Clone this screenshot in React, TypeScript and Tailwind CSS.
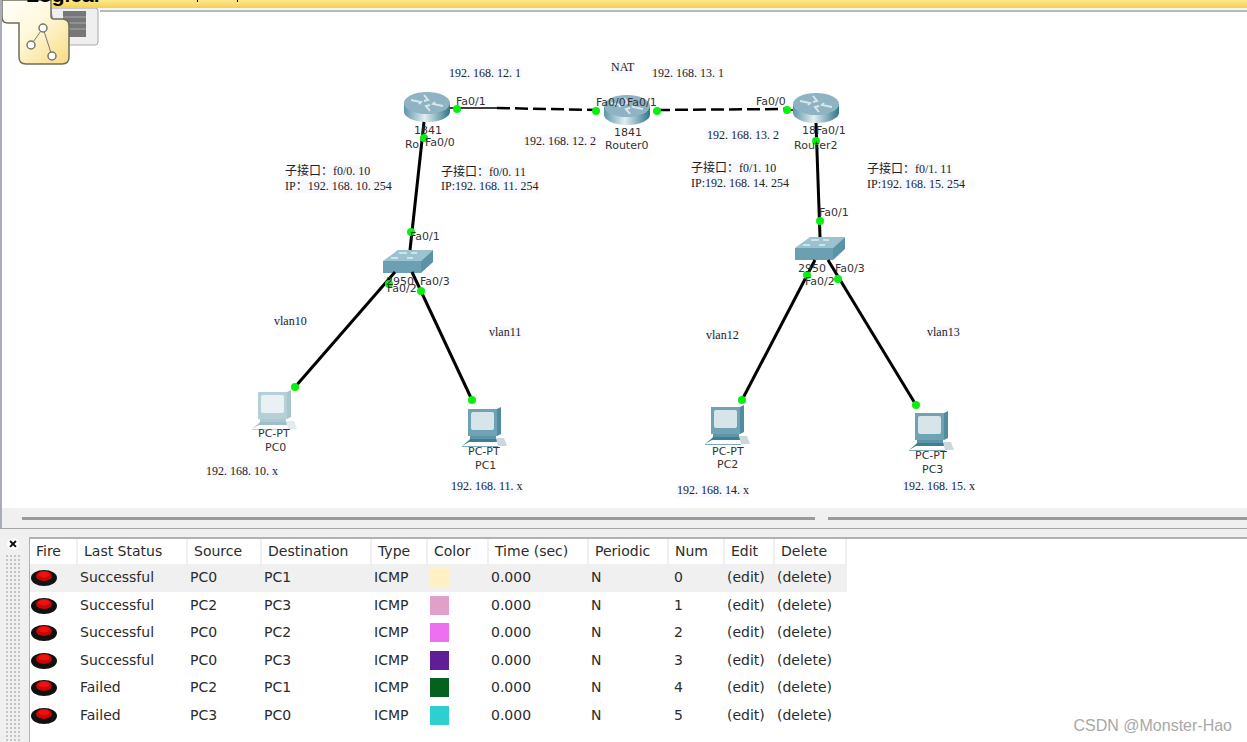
const tahoma = "font-['DejaVu_Sans',sans-serif]";
const simsun = "font-['Liberation_Serif','Noto_Sans_CJK_SC',serif] text-[12px] leading-[13px] bg-[#f7f9ff] text-[#222]";

const labels = [
  { text: "192. 168. 12. 1", pos: "left-[449px] top-[67px]" },
  { text: "NAT", pos: "left-[611px] top-[61px]" },
  { text: "192. 168. 13. 1", pos: "left-[652px] top-[67px]" },
  { text: "192. 168. 12. 2", pos: "left-[524px] top-[135px]" },
  { text: "192. 168. 13. 2", pos: "left-[707px] top-[129px]" },
  { text: "子接口：f0/0. 10", pos: "left-[285px] top-[165px]" },
  { text: "IP：192. 168. 10. 254", pos: "left-[285px] top-[180px]" },
  { text: "子接口：f0/0. 11", pos: "left-[441px] top-[166px]" },
  { text: "IP:192. 168. 11. 254", pos: "left-[441px] top-[180px]" },
  { text: "子接口：f0/1. 10", pos: "left-[691px] top-[162px]" },
  { text: "IP:192. 168. 14. 254", pos: "left-[691px] top-[177px]" },
  { text: "子接口：f0/1. 11", pos: "left-[867px] top-[163px]" },
  { text: "IP:192. 168. 15. 254", pos: "left-[867px] top-[178px]" },
  { text: "vlan10", pos: "left-[274px] top-[315px]" },
  { text: "vlan11", pos: "left-[489px] top-[326px]" },
  { text: "vlan12", pos: "left-[706px] top-[329px]" },
  { text: "vlan13", pos: "left-[927px] top-[326px]" },
  { text: "192. 168. 10. x", pos: "left-[206px] top-[465px]" },
  { text: "192. 168. 11. x", pos: "left-[451px] top-[480px]" },
  { text: "192. 168. 14. x", pos: "left-[677px] top-[484px]" },
  { text: "192. 168. 15. x", pos: "left-[903px] top-[480px]" },
];

const deviceText = [
  { text: "1841", pos: "left-[414px] top-[124px]" },
  { text: "Ro", pos: "left-[405px] top-[138px]" },
  { text: "1841", pos: "left-[614px] top-[126px]" },
  { text: "Router0", pos: "left-[605px] top-[139px]" },
  { text: "18", pos: "left-[802px] top-[124px]" },
  { text: "Router2", pos: "left-[794px] top-[139px]" },
  { text: "2950", pos: "left-[386px] top-[275px]" },
  { text: "2950", pos: "left-[798px] top-[262px]" },
  { text: "PC-PT", pos: "left-[258px] top-[427px]" },
  { text: "PC0", pos: "left-[265px] top-[441px]" },
  { text: "PC-PT", pos: "left-[468px] top-[445px]" },
  { text: "PC1", pos: "left-[475px] top-[459px]" },
  { text: "PC-PT", pos: "left-[712px] top-[445px]" },
  { text: "PC2", pos: "left-[717px] top-[458px]" },
  { text: "PC-PT", pos: "left-[915px] top-[449px]" },
  { text: "PC3", pos: "left-[922px] top-[463px]" },
];

const ports = [
  { text: "Fa0/1", pos: "left-[456px] top-[96px]" },
  { text: "Fa0/0", pos: "left-[425px] top-[137px]" },
  { text: "Fa0/0", pos: "left-[596px] top-[97px]" },
  { text: "Fa0/1", pos: "left-[627px] top-[97px]" },
  { text: "Fa0/0", pos: "left-[756px] top-[96px]" },
  { text: "Fa0/1", pos: "left-[816px] top-[125px]" },
  { text: "Fa0/1", pos: "left-[410px] top-[231px]" },
  { text: "Fa0/3", pos: "left-[420px] top-[276px]" },
  { text: "Fa0/2", pos: "left-[387px] top-[283px]" },
  { text: "Fa0/1", pos: "left-[819px] top-[207px]" },
  { text: "Fa0/3", pos: "left-[835px] top-[263px]" },
  { text: "Fa0/2", pos: "left-[805px] top-[276px]" },
];

const dots = [
  [457, 109], [596, 111], [657, 111], [787, 110], [424, 138], [816, 141],
  [411, 232], [820, 221], [389, 284], [421, 291], [807, 275], [838, 279],
  [295, 387], [472, 400], [742, 400], [916, 405],
];

const rows = [
  { status: "Successful", src: "PC0", dst: "PC1", color: "bg-[#fff1c4]", num: 0 },
  { status: "Successful", src: "PC2", dst: "PC3", color: "bg-[#e0a0c8]", num: 1 },
  { status: "Successful", src: "PC0", dst: "PC2", color: "bg-[#ec70f0]", num: 2 },
  { status: "Successful", src: "PC0", dst: "PC3", color: "bg-[#601e96]", num: 3 },
  { status: "Failed", src: "PC2", dst: "PC1", color: "bg-[#06601e]", num: 4 },
  { status: "Failed", src: "PC3", dst: "PC0", color: "bg-[#2fcfd0]", num: 5 },
];

const headers = ["Fire", "Last Status", "Source", "Destination", "Type", "Color", "Time (sec)", "Periodic", "Num", "Edit", "Delete"];
const gridCols = "grid grid-cols-[48px_110px_74px_110px_56px_61px_100px_80px_56px_50px_72px]";

function Router({ x, y }: { x: number; y: number }) {
  return (
    <g transform={`translate(${x} ${y})`}>
      <path d="M0 11v9c0 5 10 10 23 10s23-5 23-10v-9z" fill="url(#routerSide)" />
      <ellipse cx="23" cy="11" rx="23" ry="11" fill="#8fb3c3" />
      <path d="M7 8l10 2-2 2M39 14l-10-2 2-2M20 3l4 5-4 1M26 19l-4-5 4-1" fill="none" stroke="#d8e6ec" strokeWidth="2" />
    </g>
  );
}

function Switch({ x, y }: { x: number; y: number }) {
  return (
    <g transform={`translate(${x} ${y})`}>
      <path d="M0 11L15 0h35L38 11z" fill="#9ac3cf" />
      <path d="M0 11h38v12H0z" fill="#6aa0b2" />
      <path d="M38 11L50 0v12L38 23z" fill="#5b93a6" />
      <path d="M16 3h8M28 3h6M8 8h7M24 8h6" stroke="#e2eef2" strokeWidth="1.5" />
    </g>
  );
}

function Pc({ x, y, faded }: { x: number; y: number; faded?: boolean }) {
  return (
    <g transform={`translate(${x} ${y})`} opacity={faded ? 0.5 : 1}>
      <path d="M6 1h29l4-2v27l-4 2H6z" fill="#4f8ca0" />
      <path d="M6 1h29v27H6z" fill="#6fa3b3" />
      <rect x="9" y="4" width="23" height="18" rx="2" fill="#d7e4ea" />
      <path d="M8 28h26v3H8z" fill="#5b95a7" />
      <path d="M8 31h27l3 2-2 1H7l-7 4 6-5z" fill="#3f7f95" />
      <path d="M34 30h8l3 8H36z" fill="#c9d8de" />
      <path d="M0 38h36v1H0z" fill="#7da9b8" />
    </g>
  );
}

function Canvas() {
  return (
    <div className="relative h-[508px] overflow-hidden border-l-2 border-[#a9aeb6] bg-white">
      {/* the picture is offset by the 2px border, so the svg is pulled back */}
      <svg className="absolute -left-[2px] top-0" width="1247" height="508">
        <defs>
          <linearGradient id="routerSide" x1="0" x2="1" y1="0" y2="0">
            <stop offset="0" stopColor="#5f95a8" />
            <stop offset="0.45" stopColor="#e2eef2" />
            <stop offset="1" stopColor="#2f7588" />
          </linearGradient>
          <linearGradient id="tile" x1="0" x2="1" y1="0" y2="1">
            <stop offset="0" stopColor="#ffffff" />
            <stop offset="0.45" stopColor="#fff8dc" />
            <stop offset="1" stopColor="#f8db80" />
          </linearGradient>
        </defs>
        <Router x={404} y={92} />
        <Router x={604} y={95} />
        <Router x={793} y={93} />
        <Switch x={383} y={250} />
        <Switch x={795} y={237} />
        <Pc x={252} y={391} faded />
        <Pc x={462} y={408} />
        <Pc x={705} y={406} />
        <Pc x={909} y={412} />
        <path d="M450 108H497M786 110H793" stroke="#000" strokeWidth="1.5" />
        <path d="M497 108L596 110M657 110L787 109" stroke="#000" strokeWidth="2.5" strokeDasharray="13 5" />
        <g stroke="#000" strokeWidth="3" fill="none">
          <path d="M424 122L410 250" />
          <path d="M816 123L820 237" />
          <path d="M395 272L295 387" />
          <path d="M412 272L472 400" />
          <path d="M815 260L742 400" />
          <path d="M828 260L916 405" />
        </g>
        {dots.map(([cx, cy]) => (
          <circle key={`${cx}-${cy}`} cx={cx} cy={cy} r="4" fill="#08f010" />
        ))}
        <path d="M50 8h45q3 0 3 3v31q0 3-3 3H60z" fill="#efefef" stroke="#a8a8a8" />
        <rect x="63" y="11" width="23" height="26" fill="#777" />
        <path d="M63 17h23M63 23h23M63 29h23" stroke="#aaa" />
        <path d="M2 0v17q0 6 6 6h11v34q0 7 7 7h36q7 0 7-7V26q0-7-7-7H54q-3 0-3-3V0z" fill="url(#tile)" stroke="#6e6e58" strokeWidth="1.5" />
        <path d="M43 28L31 45M43 28L52 56" stroke="#77776a" fill="none" />
        <circle cx="43" cy="28" r="4" fill="#fff" stroke="#77776a" strokeWidth="1.5" />
        <circle cx="31" cy="45" r="4" fill="#fff" stroke="#77776a" strokeWidth="1.5" />
        <circle cx="52" cy="56" r="4" fill="#fff" stroke="#77776a" strokeWidth="1.5" />
      </svg>

      <div className="absolute left-[50px] top-0 h-[8px] w-[1197px] bg-linear-to-b from-[#fde98c] to-[#f5cf52]" />
      <div className="absolute left-[98px] top-[8px] h-[4px] w-[1149px] border-b-2 border-[#b9b9b9] bg-[#f4f4f4]" />
      <div className="absolute left-[24px] -top-[17px] font-['Liberation_Sans',sans-serif] text-[21px] leading-[24px] font-bold text-black">Logical</div>
      <div className="absolute left-[195px] top-0 h-[2px] w-[1px] bg-black" />
      <div className="absolute left-[235px] top-0 h-[2px] w-[1px] bg-black" />

      {/* positions below are page x minus the 2px border */}
      <div className="absolute -left-[2px] top-0">
        {labels.map((l) => (
          <div key={l.text + l.pos} className={`absolute whitespace-nowrap ${simsun} ${l.pos}`}>{l.text}</div>
        ))}
        {deviceText.map((l) => (
          <div key={l.text + l.pos} className={`absolute whitespace-nowrap ${tahoma} text-[11px] leading-[13px] text-[#333] ${l.pos}`}>{l.text}</div>
        ))}
        {ports.map((l) => (
          <div key={l.text + l.pos} className={`absolute whitespace-nowrap ${tahoma} text-[11px] leading-[12px] text-[#333] ${l.pos}`}>{l.text}</div>
        ))}
      </div>
    </div>
  );
}

function Scrollbars() {
  return (
    <div className="flex h-[20px] items-center gap-[13px] border-l-2 border-[#a9aeb6] bg-[#f0f0f0] pl-[20px]">
      <div className="h-[3px] w-[793px] bg-[#9a9a9a]" />
      <div className="h-[3px] flex-1 bg-[#9a9a9a]" />
    </div>
  );
}

function FireButton() {
  return (
    <svg width="26" height="17" viewBox="0 0 26 17">
      <ellipse cx="13" cy="9" rx="13" ry="8" fill="#111" />
      <ellipse cx="13" cy="7" rx="8" ry="5" fill="#c80606" />
      <ellipse cx="13" cy="5.5" rx="5.5" ry="3" fill="#f01010" />
    </svg>
  );
}

function PduTable() {
  return (
    <div className={`${tahoma} text-[14px] text-[#2b2b2b]`}>
      <div className={`${gridCols} h-[25px] w-[817px] items-center`}>
        {headers.map((h) => (
          <div key={h} className="flex h-full items-center border-r-2 border-[#f0f0f0] pl-[6px]">{h}</div>
        ))}
      </div>
      {rows.map((r, i) => (
        <div key={r.num} className={`${gridCols} h-[27.5px] w-[817px] items-center ${i === 0 ? "bg-[#f0f0f0]" : ""}`}>
          <div className="flex items-center pl-[1px]"><FireButton /></div>
          <div className="pl-[2px]">{r.status}</div>
          <div className="pl-[2px]">{r.src}</div>
          <div className="pl-[2px]">{r.dst}</div>
          <div className="pl-[2px]">ICMP</div>
          <div className="pl-[2px]"><div className={`size-[19px] ${r.color}`} /></div>
          <div className="pl-[2px]">0.000</div>
          <div className="pl-[2px]">N</div>
          <div className="pl-[5px]">{r.num}</div>
          <div className="pl-[2px]">(edit)</div>
          <div className="pl-[2px]">(delete)</div>
        </div>
      ))}
    </div>
  );
}

function BottomPanel() {
  return (
    <div className="relative flex h-[214px] border-t border-[#a5a5a5] bg-[#f0f0f0]">
      <div className="flex w-[29px] shrink-0 flex-col items-center pr-[4px] pt-[9px]">
        <svg className="rounded-full bg-white" width="12" height="12" viewBox="0 0 12 12">
          <path d="M3 3l6 6M9 3l-6 6" stroke="#111" strokeWidth="2" />
        </svg>
        <div className="mt-[4px] h-[190px] w-[16px] bg-[radial-gradient(#c4c4c4_1px,transparent_1.2px)] bg-size-[4px_4px]" />
      </div>
      <div className="mt-[8px] flex-1 border-t-2 border-l border-[#aeb2b6] bg-white">
        <PduTable />
      </div>
      <div className="absolute bottom-[7px] right-[15px] font-['Liberation_Sans',sans-serif] text-[16px] leading-[18px] text-[#a8a8a8]">CSDN @Monster-Hao</div>
    </div>
  );
}

export default function App() {
  return (
    <div className="h-[742px] w-[1247px] overflow-hidden bg-white">
      <Canvas />
      <Scrollbars />
      <BottomPanel />
    </div>
  );
}
